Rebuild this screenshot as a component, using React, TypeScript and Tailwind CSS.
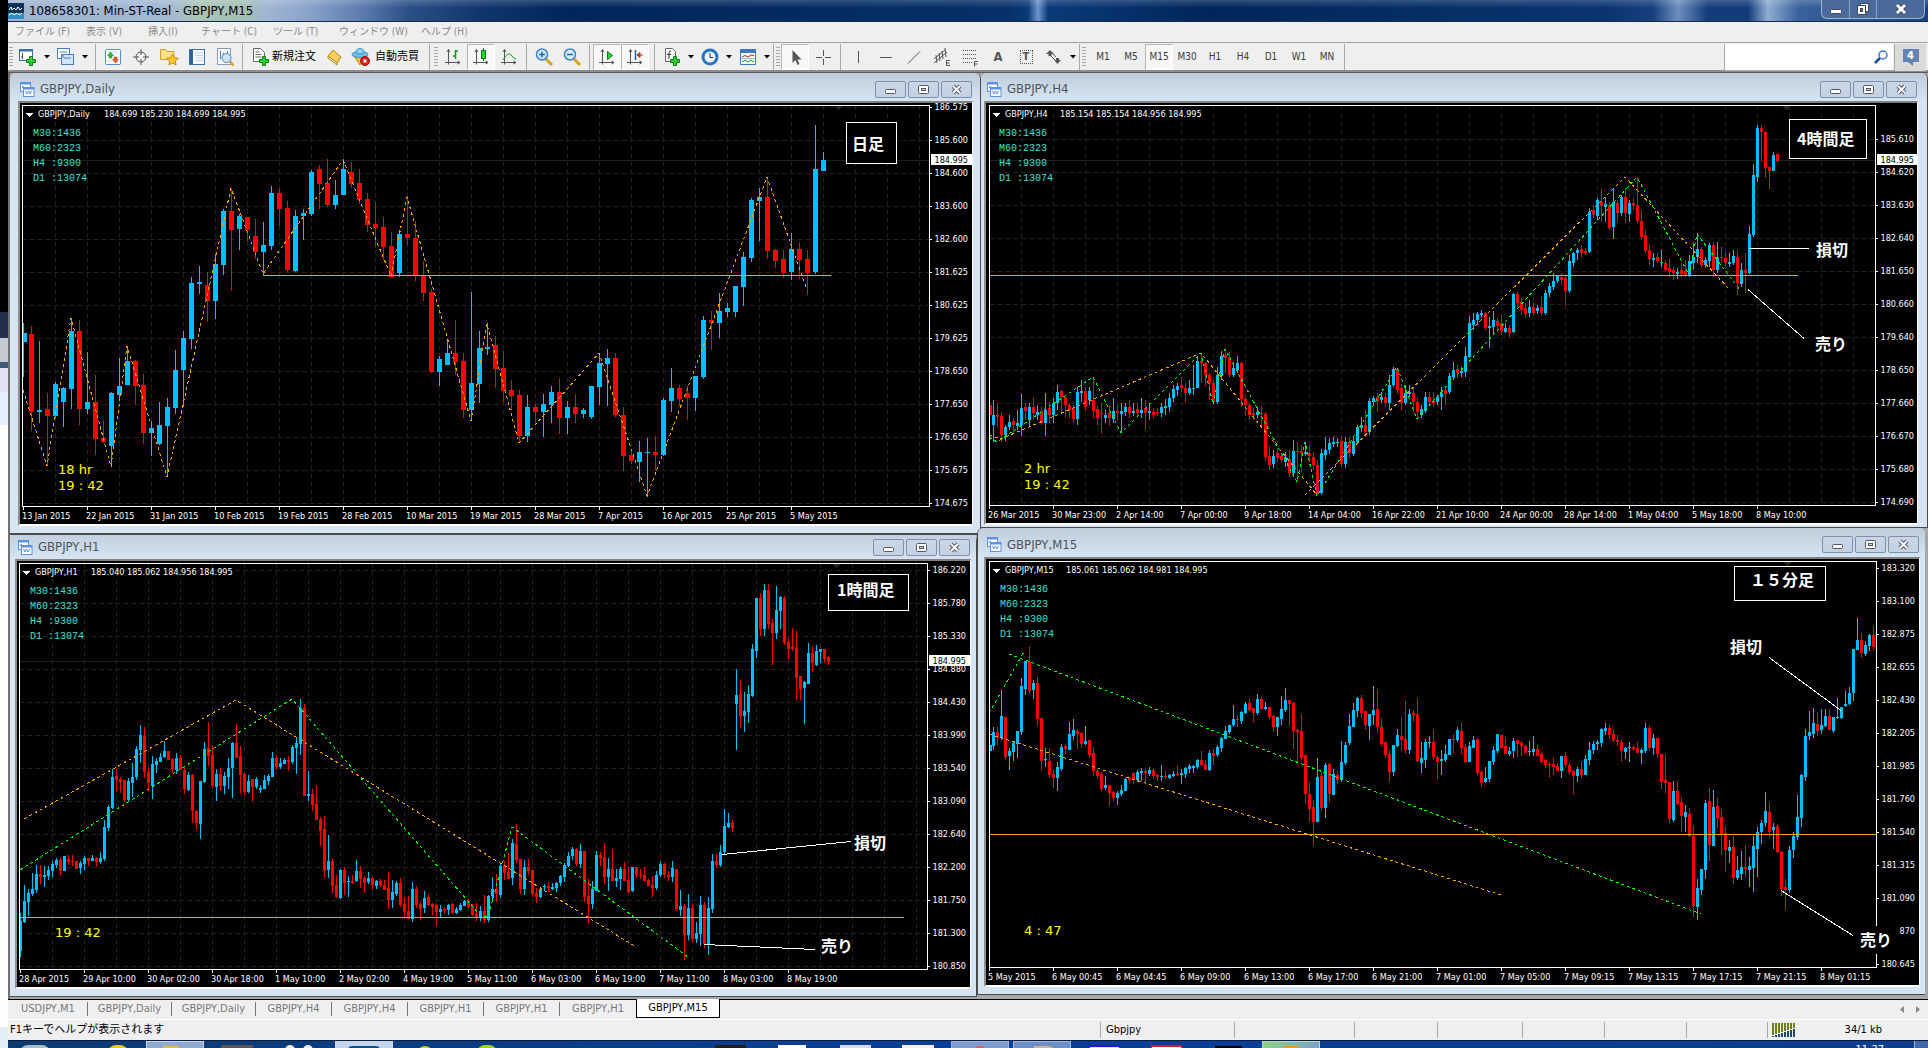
import React from "react";

type Pt = [number, number];

type Note = {
  text: string;
  at: Pt;
  line?: [number, number, number, number];
  box?: [number, number, number, number];
};

type ChartData = {
  view: [number, number, number, number];
  plot: [number, number, number, number];
  title: string;
  quote: string;
  quoteX: number;
  base: number;
  step: number;
  body: number;
  x0: number;
  priceY: number;
  prices: string[];
  dates: string[];
  grid: boolean;
  now?: number;
  support: [number, number, number];
  marker: number;
  orange: Pt[][];
  green: Pt[][];
  timer: { text: string; at: Pt }[];
  statsX: number;
  notes: Note[];
  cover?: [number, number, number, number];
  candles: string;
};

// candles: direction (B up / R down) then high, body top, body bottom, low
const dailyCandles = `
B700,730,757,860 R708,732,965,1022 B752,960,966,1000 R909,957,977,1127 B875,882,977,985 B890,894,936,1010
B683,723,897,957 R690,723,957,1004 B786,936,957,971 R856,936,1047,1094 R990,1044,1056,1060 B906,909,1067,1130
B804,888,915,927 B767,813,885,885 R811,813,888,941 R852,885,1028,1062 B993,1014,1029,1097 B936,1005,1062,1064
B924,951,1008,1160 B780,840,954,971 B724,744,840,951 B561,579,747,776 B528,576,582,612 R546,585,633,696
B492,522,633,686 B357,363,525,555 R293,363,420,603 B372,378,417,480 R381,381,420,453 R388,438,486,507
B396,465,486,556 B288,309,468,480 R294,309,357,407 R333,354,540,545 B360,378,543,546 B357,369,378,450
B240,246,372,377 R226,237,282,357 R207,279,345,350 B270,315,345,357 B208,237,315,315 R216,246,282,294
R237,279,330,342 R309,327,405,426 R336,402,414,471 R381,411,471,510 R427,468,561,561 B420,432,549,560
R319,432,444,468 R393,444,557,573 R513,557,609,632 R598,606,846,849 B798,807,846,887 B747,789,825,825
R690,789,816,855 R789,813,960,984 B606,879,960,993 B724,774,882,939 B700,771,777,795 R738,765,837,894
R783,834,903,936 R870,900,918,960 R900,915,1038,1060 B915,951,1038,1056 R942,951,966,1005 B912,942,966,1041
B888,906,945,998 R864,906,984,1032 B933,951,984,1032 R912,951,972,998 B953,960,972,984 B888,888,981,987
B790,819,891,945 B777,804,822,948 R789,804,975,980 R951,975,1098,1143 R1078,1095,1113,1122 B1053,1086,1116,1176
B1044,1086,1088,1220 R1038,1086,1095,1140 B924,930,1095,1098 B834,894,933,966 R885,894,927,948 R888,909,924,990
B858,858,924,963 B678,690,861,866 R663,690,699,780 B609,663,699,744 B639,654,666,681 B588,588,666,681
B486,501,591,648 B324,330,504,516 B294,321,333,453 R262,321,483,507 R477,480,513,534 R480,507,549,564
B430,477,546,570 R456,477,510,567 R480,507,549,615 B105,237,546,552 B186,210,243,243`;

const h4Candles = `
R928,945,975,1010 B930,975,1005,1055 R940,975,980,1010 R965,978,1035,1055 B1005,1010,1035,1052 B975,995,1010,1020
R985,993,1005,1030 B960,1000,1008,1020 B912,955,1005,1038 R940,952,962,990 B940,952,990,1010 R925,952,970,990
B945,965,975,990 R950,962,998,1005 B910,960,998,1038 R935,955,975,1000 B925,940,975,1000 B885,905,940,960
R900,903,922,965 R920,922,945,980 R940,945,960,985 R945,958,988,1000 B890,905,988,1005 B870,903,910,935
R890,903,952,960 B890,903,930,945 R862,930,962,985 R948,958,985,1005 R940,968,972,1030 B960,975,985,1000
R945,970,985,1005 B925,962,988,1000 R945,962,968,990 B940,962,972,1028 B940,952,965,978 R930,950,968,985
B940,962,968,978 R940,958,970,978 B925,960,968,985 R930,955,970,1020 B940,962,968,990 R955,965,975,985
R955,965,970,978 B940,952,970,980 B928,948,955,975 B910,925,950,965 B885,898,925,935 B880,888,900,918
R862,885,895,905 R878,895,910,935 B870,893,908,915 B825,893,896,915 B800,812,893,895 R790,812,820,880
R815,818,855,888 R850,855,880,930 R870,880,935,942 B830,855,935,942 B782,798,858,870 R778,795,805,850
R785,800,855,862 B815,835,855,862 B798,820,840,850 R815,820,928,952 R925,928,945,978 R938,945,975,990
R955,970,975,990 B950,965,975,985 R948,968,972,1010 R965,972,1100,1112 R1072,1098,1125,1140 B1080,1098,1122,1135
R1075,1090,1105,1115 R1090,1098,1110,1120 B1085,1100,1115,1130 R1080,1108,1148,1160 B1050,1082,1150,1160 R1055,1082,1085,1175
R1065,1082,1090,1145 B1060,1085,1092,1098 R1065,1090,1098,1115 R1085,1100,1125,1140 R1110,1125,1208,1215 B1078,1090,1210,1215
B1040,1080,1095,1110 B1045,1058,1080,1092 B1040,1055,1062,1070 B1045,1055,1060,1070 R1038,1052,1122,1130 B1040,1055,1122,1135
R1040,1055,1090,1105 B1045,1052,1092,1098 B1005,1012,1055,1060 B980,1005,1015,1025 R960,1005,1025,1042 B925,932,1025,1035
B918,925,935,945 R910,922,932,965 B905,920,930,940 R910,922,938,950 B855,885,940,960 B832,838,885,892
R835,838,900,910 R882,895,938,960 B885,908,938,945 B885,905,912,920 R895,908,935,965 R925,935,965,990
B945,958,975,985 B905,920,962,970 R905,920,935,945 R905,932,938,950 B915,922,935,945 B890,908,922,960
R888,900,912,945 B850,858,905,912 B815,840,862,868 R825,838,848,865 B830,842,850,860 B770,798,845,860
B678,700,800,805 B670,690,705,720 B665,672,690,705 B660,668,675,685 R665,668,715,720 B680,708,715,775
B662,690,712,735 R685,692,708,725 R675,700,722,735 B700,715,725,730 R705,715,728,742 B608,612,725,730
R605,612,640,650 R625,635,660,675 R640,655,672,680 B630,650,668,680 R640,652,668,675 B645,655,662,672
R618,650,668,675 B600,608,668,675 B580,588,608,620 B550,572,590,600 B555,558,572,580 R550,560,570,585
R558,565,602,645 B495,512,602,610 B485,490,518,530 B475,480,490,510 R465,478,488,500 R475,482,488,495
B355,365,485,490 R345,360,375,385 B325,330,378,390 R297,335,348,395 B320,342,350,395 R335,345,415,420
B295,335,412,448 R330,338,370,395 B315,320,370,378 R295,320,370,398 B330,338,372,395 R325,338,348,360
R262,345,392,398 R360,392,440,450 R420,435,482,490 R465,480,508,525 B490,505,510,530 R490,502,512,520
B480,515,520,530 R510,518,540,545 R508,535,545,562 R530,540,550,570 B535,545,552,568 R520,540,552,562
R510,542,555,562 B495,512,555,560 B460,500,518,540 B430,478,502,518 R470,478,525,535 B500,510,525,535
B458,465,512,530 R455,465,540,562 B455,500,540,548 R470,500,505,520 R485,505,520,530 B490,515,522,532
B480,498,518,525 R480,500,580,615 B520,540,582,592 R490,540,548,608 B408,432,548,552 B222,255,435,440
B105,115,260,275 R105,115,125,215 R122,125,235,262 R230,232,242,297 B186,195,242,243 R192,193,213,215`;

const h1Candles = `
B1150,1172,1262,1280 B1065,1113,1176,1178 B1077,1089,1116,1158 B1029,1077,1092,1098 B1005,1032,1080,1088 R1005,1032,1041,1062
B1008,1035,1041,1071 B1008,1020,1038,1050 B993,1002,1023,1041 B984,990,1005,1014 R984,990,1023,1035 B978,978,1023,1023
R975,987,996,1005 R975,993,997,1008 R993,993,1017,1017 B993,999,1014,1032 B978,984,1002,1020 R984,984,993,1008
B975,984,993,993 R981,984,996,1011 B966,984,996,1002 B870,891,987,993 B825,831,894,903 B717,741,834,837
R717,738,750,786 R741,747,756,789 R750,750,810,815 B744,753,810,813 B699,741,759,801 B648,657,741,750
B585,615,660,699 R591,618,726,744 R714,726,759,783 B678,702,768,807 B684,693,705,729 B669,681,696,696
B633,663,681,684 R663,663,690,690 R684,687,717,729 B669,684,720,732 R675,684,720,720 R708,720,777,792
B726,735,780,783 R732,735,843,879 R840,843,879,900 B753,753,882,927 B636,657,756,759 R576,654,678,708
R645,675,768,774 B717,732,771,813 R714,732,768,783 B726,738,768,792 B684,714,741,777 B636,639,714,804
R582,639,684,684 R648,678,735,789 R729,732,786,795 B735,753,786,789 R747,747,771,813 B741,747,771,777
B765,774,779,789 B735,750,777,777 B732,738,753,765 B666,684,741,741 R675,684,711,720 B684,699,711,717
B684,690,702,702 R678,690,696,723 B645,651,696,702 B624,639,654,732 B507,534,642,675 R522,534,798,798
B723,792,797,813 R777,792,825,843 R765,822,870,870 R861,867,903,948 R858,897,1023,1044 B915,993,1020,1044
R987,993,1068,1089 R1035,1065,1101,1104 B1017,1020,1104,1106 R1011,1020,1059,1095 B1038,1052,1057,1101 R1035,1052,1059,1062
B990,1023,1053,1056 R1008,1023,1047,1074 R1038,1044,1059,1089 B1026,1044,1056,1062 R1041,1044,1065,1080 B1050,1053,1068,1077
R1047,1053,1065,1071 R1050,1065,1080,1080 R1026,1074,1110,1137 B1050,1086,1110,1134 B1053,1059,1092,1098 R1044,1059,1125,1131
R1101,1122,1146,1161 R1098,1143,1167,1167 B1056,1077,1167,1176 R1068,1077,1125,1134 R1116,1122,1137,1170 B1083,1104,1134,1149
R1095,1101,1125,1128 R1119,1122,1131,1155 R1122,1125,1146,1188 B1125,1137,1146,1164 R1131,1137,1141,1149 B1122,1125,1140,1155
R1119,1122,1149,1152 B1131,1137,1149,1152 B1119,1125,1140,1143 B1110,1113,1128,1128 R1107,1113,1131,1134 R1122,1128,1155,1158
R1119,1152,1164,1173 B1128,1143,1164,1173 R1095,1143,1170,1179 B1095,1098,1170,1175 B1041,1077,1098,1110 R1032,1077,1092,1116
B1000,1008,1095,1104 R993,1005,1029,1050 R969,1026,1047,1047 B927,939,1044,1065 R882,942,990,999 R987,987,1077,1092
B990,1011,1077,1095 R987,1011,1023,1035 R1020,1020,1092,1102 R1074,1089,1101,1119 B1074,1077,1101,1104 B1062,1068,1070,1083
R1056,1068,1074,1086 B1059,1071,1076,1080 B1056,1059,1074,1086 B1035,1038,1059,1068 B999,1005,1041,1056 B966,978,1008,1011
B951,957,978,990 R954,957,1002,1008 B942,963,1002,1014 R963,963,1101,1116 R1047,1098,1122,1179 B1053,1077,1122,1137
B963,975,1083,1083 R966,975,984,1008 R939,981,1041,1062 B984,1017,1041,1083 R957,1017,1053,1053 B1017,1044,1053,1071
B1011,1017,1047,1080 R996,1017,1053,1053 R1011,1050,1086,1089 B1011,1011,1083,1086 R1011,1011,1035,1044 R1017,1035,1039,1047
R1011,1035,1053,1053 R1047,1050,1068,1068 R1038,1065,1074,1101 B1023,1035,1074,1080 B993,1002,1035,1041 R999,1002,1035,1044
R1023,1035,1041,1053 B993,1014,1041,1056 R1017,1017,1137,1143 B1080,1128,1140,1158 R1122,1128,1215,1290 B1092,1134,1215,1230
R1122,1134,1227,1236 B1176,1209,1227,1239 B1098,1125,1212,1248 R1116,1125,1242,1254 B1101,1134,1245,1275 B972,993,1137,1149
R972,993,1005,1014 B945,966,1005,1011 B837,888,966,972 B849,879,891,894 R870,879,894,906 B417,495,522,660
R450,492,558,594 B486,543,558,606 B465,492,546,579 B342,357,498,501 B204,204,363,384 R189,204,297,318
B162,180,297,318 R162,180,282,297 R267,279,309,405 B168,240,309,327 B198,201,243,297 R198,204,339,345
R324,336,357,387 R294,351,356,363 R303,354,444,510 R438,438,477,510 B453,456,474,582 B339,369,462,462
R351,369,399,426 B345,363,405,408 B357,357,366,399 R357,357,387,399 R378,381,396,405`;

const m15Candles = `
B640,645,663,690 B591,606,648,660 R591,606,624,645 B486,558,624,630 R561,561,681,690 B654,663,678,720
B633,639,666,693 B603,603,642,684 B444,468,606,615 B393,393,477,495 R351,396,483,492 B450,459,480,507
R441,459,567,588 R564,564,693,720 B654,687,690,711 R654,693,735,744 R717,732,744,774 B696,711,744,783
B642,651,717,723 R642,648,657,672 B576,612,660,660 B567,600,618,630 R597,603,612,657 R606,609,642,654
B588,633,642,645 R630,630,675,684 R651,669,723,738 R717,723,738,747 R726,732,777,783 B738,765,774,780
R765,765,789,828 R783,786,804,813 B783,789,804,825 B765,780,792,798 B744,747,783,783 R741,744,750,759
R729,729,750,762 B720,726,750,756 B714,723,729,753 R717,723,729,762 B711,720,732,738 R714,720,738,747
R732,735,741,753 B705,738,741,753 R723,738,741,747 B732,735,744,747 B723,732,738,741 R708,732,735,738
B717,729,735,762 B711,714,732,744 B702,708,717,729 B705,708,714,729 B687,690,711,717 R663,690,705,708
R690,702,720,720 B660,669,720,723 R657,669,678,705 B645,651,675,681 B621,624,654,666 B588,603,627,627
B585,585,606,612 B525,567,585,591 R555,567,570,591 B543,546,573,582 B516,522,549,552 R507,519,540,546
R534,534,549,576 B492,507,549,555 R501,507,537,540 B516,531,537,540 R531,531,561,567 R555,558,591,606
B561,561,591,618 B498,537,567,585 B474,510,540,546 R510,510,522,588 R516,519,603,657 R597,600,606,699
R552,603,684,690 R675,675,792,822 R759,792,837,876 R810,831,876,948 B684,741,876,876 R726,738,834,843
B699,705,834,864 R699,702,792,816 B717,732,795,795 R723,735,750,762 B633,696,750,756 B636,645,699,705
B552,588,639,645 B519,540,591,591 B501,504,543,561 R495,504,549,564 R543,543,585,597 B552,552,588,630
B468,540,555,585 R477,537,591,609 R567,591,642,648 R636,636,675,684 R663,672,726,756 B645,645,726,738
B597,615,648,651 R561,618,630,663 R513,627,660,669 B537,552,660,672 R540,549,555,573 R504,552,693,696
B636,684,699,729 B627,636,690,714 B618,636,640,654 R597,636,681,690 R678,681,696,747 B660,687,693,735
B645,672,690,696 B627,627,675,675 R615,627,630,669 B591,600,630,636 R579,603,654,672 R642,651,696,699
B636,648,696,696 B618,630,654,654 R627,627,729,735 R720,726,759,771 B711,744,756,759 B693,693,747,756
B648,660,696,705 B612,612,663,669 R615,615,654,654 R621,648,672,672 B651,663,672,678 B624,633,663,684
R630,630,642,681 R633,639,648,678 R645,648,669,669 B633,663,666,678 B618,657,666,678 R645,657,678,678
R666,672,696,699 R687,690,705,714 R696,702,705,741 R684,702,711,735 R699,708,723,723 B678,678,723,744
R666,678,705,711 R696,705,726,735 R720,723,738,792 B711,717,738,756 R693,717,735,744 B675,687,735,735
B636,660,690,705 B633,642,660,672 B630,636,642,660 B594,597,639,651 B579,594,603,615 R585,594,615,627
R597,612,630,636 R615,630,636,648 R627,636,663,693 B651,654,666,687 B636,651,654,696 R648,651,657,663
R636,654,669,669 B654,660,669,702 B579,594,663,669 R588,594,654,663 B612,624,654,675 R624,624,672,684
R672,672,756,777 R672,750,759,789 R756,756,867,879 B753,783,870,876 R753,783,822,825 R804,816,858,906
B825,846,861,906 R834,852,918,921 R885,918,1128,1161 B1047,1074,1131,1170 B1017,1017,1080,1095 B810,819,1020,1047
R774,813,945,993 B780,831,948,948 R804,828,864,894 R837,861,912,975 R888,909,960,1026 B930,951,963,999
R918,951,1044,1062 B978,1020,1044,1050 B963,1011,1032,1050 R945,1011,1017,1041 B981,1008,1020,1071 B918,948,1014,1086
B891,906,957,1041 B870,879,906,942 B786,843,879,891 R816,846,906,921 B879,891,900,957 R882,888,966,969
R963,966,1077,1098 R1047,1071,1080,1140 B948,960,1080,1089 B906,918,960,984 B795,861,921,930 B732,735,864,891
B597,618,741,753 B543,606,618,630 B534,579,612,624 R546,582,603,618 B537,585,600,612 B537,558,588,591
R537,558,600,600 B561,561,603,609 B504,561,564,567 B531,531,564,567 B483,522,528,531 B471,489,522,525
B357,357,489,513 B264,330,360,360 R309,330,369,381 B333,345,372,378 B312,315,348,363 R288,315,351,360`;

const stats = ["M30:1436", "M60:2323", "H4 :9300", "D1 :13074"];

const daily: ChartData = {
  view: [20, 103, 952, 421],
  plot: [22, 105, 929, 506],
  title: "GBPJPY,Daily",
  quote: "184.699 185.230 184.699 184.995",
  quoteX: 104,
  base: 90,
  step: 8,
  body: 5,
  x0: 23,
  priceY: 107,
  prices: ["186.575", "185.600", "184.600", "183.600", "182.600", "181.625", "180.625", "179.625", "178.650", "177.650", "176.650", "175.675", "174.675"],
  dates: ["13 Jan 2015", "22 Jan 2015", "31 Jan 2015", "10 Feb 2015", "19 Feb 2015", "28 Feb 2015", "10 Mar 2015", "19 Mar 2015", "28 Mar 2015", "7 Apr 2015", "16 Apr 2015", "25 Apr 2015", "5 May 2015"],
  grid: true,
  now: 160,
  support: [263, 831, 275],
  marker: 837,
  orange: [[[0, 900], [3, 1127], [6, 683], [11, 1130], [13, 767], [18, 1160], [26, 293], [30, 553], [40, 210], [46, 558], [48, 320], [56, 993], [58, 702], [62, 1060], [72, 790], [78, 1217], [93, 262], [98, 600]]],
  green: [],
  timer: [{ text: "18 hr", at: [58, 474] }, { text: "19 : 42", at: [58, 490] }],
  statsX: 33,
  notes: [{ text: "日足", at: [852, 150], box: [846, 122, 50, 41] }],
  candles: dailyCandles,
};

const h4: ChartData = {
  view: [986, 103, 931, 420],
  plot: [989, 105, 1875, 505],
  title: "GBPJPY,H4",
  quote: "185.154 185.154 184.956 184.995",
  quoteX: 1060,
  base: 90,
  step: 4,
  body: 3,
  x0: 989,
  priceY: 139,
  prices: ["185.610", "184.620", "183.630", "182.640", "181.650", "180.660", "179.640", "178.650", "177.660", "176.670", "175.680", "174.690"],
  dates: ["26 Mar 2015", "30 Mar 23:00", "2 Apr 14:00", "7 Apr 00:00", "9 Apr 18:00", "14 Apr 04:00", "16 Apr 22:00", "21 Apr 10:00", "24 Apr 00:00", "28 Apr 14:00", "1 May 04:00", "5 May 18:00", "8 May 10:00"],
  grid: true,
  now: 160,
  support: [989, 1798, 275],
  marker: 1785,
  orange: [[[0, 1035], [3, 1047], [53, 790], [82, 1215]], [[79, 1215], [159, 262], [185, 597]]],
  green: [[[0, 1040], [2, 1057], [26, 862], [33, 1028], [53, 788], [56, 942], [59, 778], [77, 1175], [79, 1055], [82, 1217], [102, 832], [107, 988], [162, 262], [175, 555], [177, 432], [188, 602]]],
  timer: [{ text: "2 hr", at: [1024, 473] }, { text: "19 : 42", at: [1024, 489] }],
  statsX: 999,
  notes: [
    { text: "4時間足", at: [1797, 145], box: [1789, 119, 77, 39] },
    { text: "損切", at: [1816, 256], line: [1749, 248, 1809, 248] },
    { text: "売り", at: [1815, 350], line: [1748, 289, 1804, 338] },
  ],
  candles: h4Candles,
};

const h1: ChartData = {
  view: [17, 561, 953, 426],
  plot: [19, 563, 927, 969],
  title: "GBPJPY,H1",
  quote: "185.040 185.062 184.956 184.995",
  quoteX: 91,
  base: 530,
  step: 4,
  body: 3,
  x0: 20,
  priceY: 570,
  prices: ["186.220", "185.780", "185.330", "184.880", "184.430", "183.990", "183.540", "183.090", "182.640", "182.200", "181.750", "181.300", "180.850"],
  dates: ["28 Apr 2015", "29 Apr 10:00", "30 Apr 02:00", "30 Apr 18:00", "1 May 10:00", "2 May 02:00", "4 May 19:00", "5 May 11:00", "6 May 03:00", "6 May 19:00", "7 May 11:00", "8 May 03:00", "8 May 19:00"],
  grid: true,
  now: 661,
  support: [20, 904, 917],
  marker: 835,
  orange: [[[1, 868], [54, 510], [154, 1250]]],
  green: [[[0, 1020], [68, 508], [115, 1155], [117, 1160], [123, 890], [167, 1280]]],
  timer: [{ text: "19 : 42", at: [55, 937] }],
  statsX: 30,
  notes: [
    { text: "1時間足", at: [837, 596], box: [828, 574, 80, 36] },
    { text: "損切", at: [854, 849], line: [722, 854, 851, 841] },
    { text: "売り", at: [821, 952], line: [704, 944, 815, 949] },
  ],
  candles: h1Candles,
};

const m15: ChartData = {
  view: [986, 559, 933, 426],
  plot: [989, 561, 1876, 967],
  title: "GBPJPY,M15",
  quote: "185.061 185.062 184.981 184.995",
  quoteX: 1066,
  base: 530,
  step: 4,
  body: 3,
  x0: 989,
  priceY: 568,
  prices: ["183.320", "183.100", "182.875", "182.655", "182.430", "182.205", "181.985", "181.760", "181.540", "181.315", "181.090", "870", "180.645"],
  dates: ["5 May 2015", "6 May 00:45", "6 May 04:45", "6 May 09:00", "6 May 13:00", "6 May 17:00", "6 May 21:00", "7 May 01:00", "7 May 05:00", "7 May 09:15", "7 May 13:15", "7 May 17:15", "7 May 21:15", "8 May 01:15"],
  grid: false,
  support: [989, 1876, 834],
  marker: 1786,
  orange: [[[0, 612], [128, 1094]]],
  green: [[[0, 548], [9, 360]], [[5, 372], [178, 1152]]],
  timer: [{ text: "4 : 47", at: [1024, 935] }],
  statsX: 1000,
  notes: [
    { text: "１５分足", at: [1750, 586], box: [1734, 566, 91, 34] },
    { text: "損切", at: [1730, 653], line: [1769, 657, 1841, 710] },
    { text: "売り", at: [1860, 946], line: [1781, 890, 1853, 935] },
  ],
  cover: [1855, 926, 42, 28],
  candles: m15Candles,
};

const Chart = ({ c }: { c: ChartData }) => {
  const [vx, vy, vw, vh] = c.view;
  const [l, t, r, b] = c.plot;
  const y = (v: number) => Math.round(c.base + v / 3);
  const x = (i: number) => c.x0 + i * c.step;
  const candles = c.candles
    .trim()
    .split(/\s+/)
    .map((s) => ({ up: s[0] === "B", v: s.slice(1).split(",").map(Number) }));
  const line = (pts: Pt[]) => pts.map(([i, v]) => `${x(i)},${y(v)}`).join(" ");
  const gridX: number[] = [];
  for (let g = c.x0 + 32; g < r; g += 32) gridX.push(g);

  return (
    <svg
      viewBox={`${vx} ${vy} ${vw} ${vh}`}
      className="block w-full bg-black font-['DejaVu_Sans_Condensed','Noto_Sans',sans-serif] text-[9px]"
      role="img"
      aria-label={c.title}
      shapeRendering="crispEdges"
    >
      {c.grid && (
        <g stroke="#1f1f1f" strokeDasharray="5 3">
          {gridX.map((g) => (
            <line key={g} x1={g + 0.5} x2={g + 0.5} y1={t} y2={b} />
          ))}
          {c.prices.map((p, i) => (
            <line key={p} x1={l} x2={r} y1={c.priceY + i * 33 + 0.5} y2={c.priceY + i * 33 + 0.5} />
          ))}
        </g>
      )}
      {c.now && <rect x={l} y={c.now} width={r - l} height="1" fill="#1f1f1f" />}
      <path d={`M${c.marker - 3} ${t + 1}h8l-4 4z`} fill="#262626" />

      {candles.map(({ up, v }, i) => (
        <g key={i} fill={up ? "#00bfff" : "#ff0000"}>
          <rect x={x(i)} y={y(v[0])} width="1" height={Math.max(1, y(v[3]) - y(v[0]))} />
          <rect
            x={Math.max(l, x(i) - (c.body - 1) / 2)}
            y={y(v[1])}
            width={c.body}
            height={Math.max(1, y(v[2]) - y(v[1]))}
          />
        </g>
      ))}
      <g fill="none" strokeDasharray="3 3">
        {c.orange.map((p, i) => (
          <polyline key={i} points={line(p)} stroke="#ffa500" />
        ))}
        {c.green.map((p, i) => (
          <polyline key={i} points={line(p)} stroke="#00ff00" />
        ))}
      </g>
      <rect x={c.support[0]} y={c.support[2]} width={c.support[1] - c.support[0]} height="1" fill="#ffa500" />

      {/* plot frame and scales */}
      <rect x={l + 0.5} y={t + 0.5} width={r - l} height={b - t} fill="none" stroke="#fff" />
      {c.cover && <rect x={c.cover[0]} y={c.cover[1]} width={c.cover[2]} height={c.cover[3]} fill="#000" />}
      {c.prices.map((p, i) => (
        <g key={p} fill="#fff">
          {p.length > 3 && <rect x={r} y={c.priceY + i * 33} width="3" height="1" />}
          <text x={r + 39} y={c.priceY + i * 33 + 3} textAnchor="end">
            {p}
          </text>
        </g>
      ))}
      {c.dates.map((d, i) => (
        <g key={d} fill="#fff">
          <rect x={c.x0 + i * 64} y={b} width="1" height="4" />
          <text x={c.x0 + i * 64 - 1} y={b + 13}>
            {d}
          </text>
        </g>
      ))}
      {c.now && (
        <>
          <rect x={r + 2} y={c.now - 6} width={vx + vw - r - 2} height="11" fill="#fff" />
          <text x={r + 39} y={c.now + 3} textAnchor="end">
            184.995
          </text>
        </>
      )}

      <path d={`M${l + 4} ${t + 8}h7l-3.5 4z`} fill="#fff" />
      <text x={l + 16} y={t + 12} fill="#fff">
        {c.title}
      </text>
      <text x={c.quoteX} y={t + 12} fill="#fff">
        {c.quote}
      </text>
      <g fill="#40e0d0" className="font-['Liberation_Mono',monospace] text-[10px] whitespace-pre">
        {stats.map((s, i) => (
          <text key={s} x={c.statsX} y={t + 31 + i * 15}>
            {s}
          </text>
        ))}
      </g>
      <g fill="#ffff00" className="font-['DejaVu_Sans',sans-serif] text-[13px]">
        {c.timer.map((m) => (
          <text key={m.text} x={m.at[0]} y={m.at[1]}>
            {m.text}
          </text>
        ))}
      </g>

      {c.notes.map((n) => (
        <g key={n.text}>
          {n.box && (
            <rect x={n.box[0] + 0.5} y={n.box[1] + 0.5} width={n.box[2]} height={n.box[3]} fill="#000" stroke="#fff" />
          )}
          {n.line && <line x1={n.line[0]} y1={n.line[1] + 0.5} x2={n.line[2]} y2={n.line[3] + 0.5} stroke="#fff" />}
          <text
            x={n.at[0]}
            y={n.at[1]}
            fill="#fff"
            className="font-['Noto_Sans_CJK_JP',sans-serif] text-[16px] font-bold"
          >
            {n.text}
          </text>
        </g>
      ))}
    </svg>
  );
};

const ChartIcon = () => (
  <svg viewBox="0 0 15 15" className="w-[15px] h-[15px] shrink-0" fill="none" stroke="#5b93e6">
    <rect x="0.5" y="0.5" width="10" height="9" fill="#fff" />
    <path d="M0.5 1.5h10" strokeWidth="2" />
    <path d="M2 6l1-2 1 3" />
    <rect x="3.5" y="5.5" width="10.5" height="9" fill="#fff" />
    <path d="M3.5 6.5h10.5" strokeWidth="2" />
    <path d="M5.5 9l1.5 3 1.5-3 1.5 3 1.5-3" />
  </svg>
);

const winBtn =
  "w-[31px] h-[17px] flex items-center justify-center rounded-xs border border-[#8090ac] bg-linear-to-b from-[#c9d6e5] to-[#c3d1e2]";

const WindowButtons = () => (
  <div className="flex gap-0.5">
    <button type="button" aria-label="最小化" className={winBtn}>
      <svg viewBox="0 0 11 11" className="w-[11px] h-[11px]">
        <rect x="0.5" y="5.5" width="10" height="4" rx="1" fill="#fff" stroke="#535666" />
      </svg>
    </button>
    <button type="button" aria-label="最大化" className={winBtn}>
      <svg viewBox="0 0 11 11" className="w-[11px] h-[11px]" stroke="#535666">
        <rect x="0.5" y="1.5" width="10" height="8" rx="1" fill="#fff" />
        <rect x="3.5" y="4.5" width="4" height="2" fill="#c6d3e3" />
      </svg>
    </button>
    <button type="button" aria-label="閉じる" className={winBtn}>
      <svg viewBox="0 0 11 11" className="w-[11px] h-[11px]">
        <path d="M2 2l7 7M9 2l-7 7" stroke="#535666" strokeWidth="4" />
        <path d="M2 2l7 7M9 2l-7 7" stroke="#fff" strokeWidth="2" />
      </svg>
    </button>
  </div>
);

const ChartWindow = ({ c, frame, bar }: { c: ChartData; frame: string; bar: string }) => (
  <section className={`border-[#4a4a4c] rounded-t-md bg-[#d7e4f2] ${frame}`}>
    <header className={`flex items-center justify-between ${bar}`}>
      <h2 className="flex items-center gap-[5px] text-[13px] leading-4 text-[#4c5560]">
        <ChartIcon />
        {c.title}
      </h2>
      <WindowButtons />
    </header>
    <div className="border-t-2 border-l-2 border-r border-b-2 border-t-[#808080] border-l-[#909090] border-r-white border-b-white">
      <Chart c={c} />
    </div>
  </section>
);

const Grip = () => <span className="w-1 h-5 mx-px shrink-0 bg-[repeating-linear-gradient(#a8a8a8_0_1px,#efefef_1px_3px)]" />;
const Sep = ({ tight }: { tight?: boolean }) => (
  <span className={`w-px h-[26px] shrink-0 bg-[#a9a9a9] ${tight ? "mx-px" : "mx-[3px]"}`} />
);

const Drop = ({ label }: { label: string }) => (
  <button type="button" aria-label={label} className="w-[10px] h-6 flex items-center justify-center shrink-0">
    <svg viewBox="0 0 6 4" className="w-[6px] h-1">
      <path d="M0 0h6l-3 3.5z" fill="#000" />
    </svg>
  </button>
);

const Tool = ({ label, on, children }: { label: string; on?: boolean; children: React.ReactNode }) => (
  <button
    type="button"
    aria-label={label}
    className={`w-7 h-[26px] flex items-center justify-center shrink-0 ${
      on ? "bg-[#f8f8f8] border border-[#b5b5b5] border-r-white border-b-white" : ""
    }`}
  >
    <svg viewBox="0 0 20 20" className="w-5 h-5" fill="none" stroke="#555">
      {children}
    </svg>
  </button>
);

const plus = (
  <path d="M11.5 9.5h3v3h3v3h-3v3h-3v-3h-3v-3h3z" fill="#2fd02f" stroke="#067d12" />
);
const axes = <path d="M5.5 2.5v15M2 15.5h15M4 5l1.5-2.5 1.5 2.5M14.5 14l2.5 1.5-2.5 1.5" strokeWidth="1" />;

const NewOrderIcon = () => (
  <svg viewBox="0 0 20 20" className="w-5 h-5 shrink-0" fill="none" stroke="#666">
    <path d="M3.5 1.5h7l4 4v9h-11z" fill="#fff" />
    <path d="M5.5 5h4M5.5 7.500h6M5.5 10h6" />
    <g transform="translate(1 0)">{plus}</g>
  </svg>
);

const RobotIcon = () => (
  <svg viewBox="0 0 20 20" className="w-5 h-5 shrink-0" fill="none">
    <path d="M3 9l6 9 7-9z" fill="#f1c232" stroke="#b8860b" />
    <ellipse cx="9" cy="7.500" rx="8" ry="3" fill="#6fbfea" stroke="#3b8fc8" />
    <path d="M5 6q0-4.500 4-4.500t4 4.500q-4 2-8 0z" fill="#8fd0f2" stroke="#3b8fc8" />
    <circle cx="14" cy="14" r="4.500" fill="#d9201a" stroke="#a01008" />
    <rect x="12.500" y="12.500" width="3" height="3" fill="#fff" />
  </svg>
);

const menus = [
  { text: "ファイル (F)", w: "w-[71px]" },
  { text: "表示 (V)", w: "w-[62px]" },
  { text: "挿入(I)", w: "w-[53px]" },
  { text: "チャート (C)", w: "w-[72px]" },
  { text: "ツール (T)", w: "w-[66px]" },
  { text: "ウィンドウ (W)", w: "w-[82px]" },
  { text: "ヘルプ (H)", w: "w-[60px]" },
];

const frames = ["M1", "M5", "M15", "M30", "H1", "H4", "D1", "W1", "MN"];

const tabs = [
  { text: "USDJPY,M1", w: "w-[79px]" },
  { text: "GBPJPY,Daily", w: "w-[84px]" },
  { text: "GBPJPY,Daily", w: "w-[84px]" },
  { text: "GBPJPY,H4", w: "w-[76px]" },
  { text: "GBPJPY,H4", w: "w-[76px]" },
  { text: "GBPJPY,H1", w: "w-[76px]" },
  { text: "GBPJPY,H1", w: "w-[76px]" },
  { text: "GBPJPY,H1", w: "w-[76px]" },
];

const TitleBar = () => (
  <header className="flex items-center justify-between h-[22px] border-b border-[#1b2a4a] bg-[linear-gradient(#ffffff30_0,#ffffff00_8px),linear-gradient(90deg,#9db3d0_0,#a3b8d4_160px,#a9c4b8_190px,#a3c0b4_235px,#a0b5d4_260px,#8aa3cb_300px,#5f7fb0_350px,#2b5088_400px,#12366f_470px,#00265c_560px,#07306a_1000px,#0a3a77_1020px,#6d94cc_1030px,#0b3a78_1040px,#00265c_1200px,#0b3570_1600px,#16417e_1645px,#6d8fbd_1670px,#123c7a_1700px,#123c7a_1740px,#8fadd2_1760px,#3a629c_1790px,#16417e_100%)]">
    <h1 className="flex items-center gap-[5px] text-[13px] leading-5 text-black">
      <svg viewBox="0 0 16 16" className="w-4 h-4">
        <rect width="16" height="16" rx="1" fill="#0d3358" />
        <path d="M0 10h16v6h-16z" fill="#2f8fc4" />
        <path d="M1 7l2-3 1 3 2-2 2 2 2-3 2 3 2-2M1 12l3-2 2 2 3-2 2 2 3-2" fill="none" stroke="#fff" />
      </svg>
      108658301: Min-ST-Real - GBPJPY,M15
    </h1>
    <div className="flex self-start mr-[3px] rounded-b-md border border-t-0 border-[#9db2d2] bg-[#4a6a9c]">
      <button type="button" aria-label="最小化" className="w-7 h-[18px] flex items-center justify-center border-r border-[#8ba2c5]">
        <svg viewBox="0 0 12 12" className="w-3 h-3">
          <rect x="0.500" y="6.500" width="11" height="4" rx="1" fill="#fff" stroke="#414a5e" />
        </svg>
      </button>
      <button type="button" aria-label="元に戻す" className="w-[27px] h-[18px] flex items-center justify-center border-r border-[#8ba2c5]">
        <svg viewBox="0 0 12 12" className="w-3 h-3" fill="#fff" stroke="#414a5e">
          <rect x="3.500" y="0.500" width="8" height="8" />
          <rect x="0.500" y="2.500" width="8" height="9" />
          <rect x="3.500" y="5.500" width="2" height="3" fill="#4a6a9c" />
        </svg>
      </button>
      <button type="button" aria-label="閉じる" className="w-[47px] h-[18px] flex items-center justify-center">
        <svg viewBox="0 0 12 12" className="w-3 h-3">
          <path d="M2 2l8 8M10 2l-8 8" stroke="#414a5e" strokeWidth="5" />
          <path d="M2 2l8 8M10 2l-8 8" stroke="#fff" strokeWidth="3" />
        </svg>
      </button>
    </div>
  </header>
);

const Toolbar = () => (
  <div className="flex items-center h-[29px] pt-px border-b-2 border-[#8c8c8c] bg-[#efefef]">
    <Grip />
    <Tool label="新規チャート">
      <rect x="1.500" y="2.500" width="13" height="11" fill="#fff" stroke="#3a6ea5" />
      <path d="M1.500 3.500h13" stroke="#3a6ea5" strokeWidth="2" />
      <path d="M4.500 6v6M3 10h2" />
      {plus}
    </Tool>
    <Drop label="新規チャートの一覧" />
    <Tool label="組表示">
      <rect x="1.500" y="1.500" width="12" height="10" fill="#fff" stroke="#4a7ebb" />
      <rect x="5.500" y="7.500" width="12" height="10" fill="#d6e6fa" stroke="#4a7ebb" />
      <path d="M4 5h7M7 8v3M8 11h7" stroke="#4a7ebb" />
    </Tool>
    <Drop label="組表示の一覧" />
    <span className="w-0.5" />
    <Sep />
    <Tool label="気配値表示">
      <rect x="2.500" y="2.500" width="15" height="15" rx="1" fill="#fff" stroke="#4a90d9" />
      <path d="M4 5h11M4 14h11" stroke="#c5ddf5" />
      <path d="M7.500 5l3 3.500h-1.500v2.500h-3v-2.500h-1.500z" fill="#2ebd2e" stroke="#0e8a1a" strokeWidth=".5" />
      <path d="M12.500 16l3-3.500h-1.500v-2.500h-3v2.500h-1.500z" fill="#ee5a24" stroke="#b33c0b" strokeWidth=".5" />
    </Tool>
    <Tool label="データウィンドウ">
      <circle cx="10" cy="10" r="5" />
      <path d="M10 2v6M10 12v6M2 10h6M12 10h6" />
    </Tool>
    <Tool label="ナビゲーター">
      <path d="M1.500 2.500h5l1.500 2h7v8h-13.500z" fill="#fbe28a" stroke="#c9a227" />
      <path d="M13.500 7l1.800 3.800 4 .5-3 2.700.8 4-3.600-2-3.600 2 .8-4-3-2.700 4-.5z" fill="#ffc928" stroke="#c98a10" />
    </Tool>
    <Tool label="ターミナル">
      <rect x="2.500" y="2.500" width="15" height="15" fill="#f5faff" stroke="#3a6ea5" />
      <path d="M4.500 3v14" stroke="#2d62a0" strokeWidth="3" />
      <path d="M8 6h8M8 8.500h8M8 11h8M8 13.500h8" stroke="#c5d5e8" />
    </Tool>
    <Tool label="ストラテジーテスター">
      <rect x="2.500" y="1.500" width="13" height="16" fill="#f4f8fc" stroke="#8a9db5" />
      <path d="M5.500 4v8M8.500 6v6M12.500 4v4" stroke="#5b7fa8" />
      <circle cx="11.500" cy="11" r="4.500" fill="#cfe6fa" stroke="#4a86c8" />
      <path d="M15 14.500l3.500 4" stroke="#d9a520" strokeWidth="2.500" />
    </Tool>
    <Sep />
    <button type="button" className="flex items-center gap-[2px] ml-[4px] h-[26px] shrink-0">
      <NewOrderIcon />
      新規注文
    </button>
    <span className="w-1" />
    <Tool label="メタエディター">
      <path d="M4 9l5-6 8 7-4 6z" fill="#f6cf63" stroke="#b8860b" />
      <path d="M4 9l9 7v2l-9-7z" fill="#fff" stroke="#b8860b" />
    </Tool>
    <button type="button" className="flex items-center gap-[4px] ml-[3px] h-[26px] shrink-0">
      <RobotIcon />
      自動売買
    </button>
    <span className="w-[7px]" />
    <Sep />
    <Grip />
    <Tool label="バーチャート">
      {axes}
      <path d="M12.500 3v9M10 9h2.500M12.500 4h2.500" stroke="#0a9a1a" strokeWidth="1.500" />
    </Tool>
    <Tool label="ローソク足" on>
      {axes}
      <path d="M12.500 1v13" stroke="#067d12" />
      <rect x="10.500" y="3.500" width="4" height="8" fill="#2fd02f" stroke="#067d12" />
    </Tool>
    <Tool label="ラインチャート">
      {axes}
      <path d="M4 13q5-9 8-5t5 4" stroke="#0a9a1a" />
    </Tool>
    <Sep />
    <Tool label="ズームイン">
      <path d="M12 12l6 6" stroke="#d9a520" strokeWidth="3" />
      <circle cx="8" cy="7.500" r="5.500" fill="#d5ecff" stroke="#3c82c8" strokeWidth="1.500" />
      <path d="M5 7.500h6M8 4.500v6" stroke="#2264a8" strokeWidth="1.500" />
    </Tool>
    <Tool label="ズームアウト">
      <path d="M12 12l6 6" stroke="#d9a520" strokeWidth="3" />
      <circle cx="8" cy="7.500" r="5.500" fill="#d5ecff" stroke="#3c82c8" strokeWidth="1.500" />
      <path d="M5 7.500h6" stroke="#2264a8" strokeWidth="1.500" />
    </Tool>
    <Sep />
    <Tool label="自動スクロール" on>
      {axes}
      <path d="M10.500 4.500l5 4-5 4z" fill="#2fd02f" stroke="#067d12" />
    </Tool>
    <Tool label="チャートシフト" on>
      {axes}
      <path d="M10.500 3v10" stroke="#1f5fa8" strokeWidth="1.500" />
      <path d="M12 8h6M12 8l3-2.500v5z" fill="#c0390b" stroke="#c0390b" />
    </Tool>
    <span className="w-0.5" />
    <Sep />
    <Tool label="インディケーター">
      <path d="M3.500 1.500h7l3 3v10h-10z" fill="#fff" stroke="#666" />
      <path d="M9 4q-2-.5-2 2v6M5 7.500h4" stroke="#333" />
      {plus}
    </Tool>
    <Drop label="インディケーターの一覧" />
    <Tool label="時間軸">
      <circle cx="10" cy="10" r="7" fill="#e9f4ff" stroke="#2a72c4" strokeWidth="3" />
      <path d="M10 6v4.500h3" stroke="#333" />
    </Tool>
    <Drop label="時間軸の一覧" />
    <Tool label="定型チャート">
      <rect x="2.500" y="2.500" width="15" height="15" fill="#fff" stroke="#3a78c0" />
      <path d="M2.500 4.500h15" stroke="#3a78c0" strokeWidth="3" />
      <path d="M4 10l3-1.500 3 1.500 3-2 3 .5" stroke="#a02818" />
      <path d="M4 15l3-2 3 2 3-2 3 2" stroke="#0a9a1a" />
      <path d="M3 11.500h14" stroke="#9bbce0" />
    </Tool>
    <Drop label="定型チャートの一覧" />
    <Sep tight />
    <Grip />
    <Tool label="カーソル" on>
      <path d="M7.500 3v13l3-3 2 5 2-1-2-4.500h4z" fill="#555" stroke="none" />
    </Tool>
    <Tool label="十字カーソル">
      <path d="M10.500 3v6M10.500 12v6M3 10.500h6M12 10.500h6" />
    </Tool>
    <Sep />
    <Tool label="垂直線">
      <path d="M10.500 4v12" />
    </Tool>
    <Tool label="水平線">
      <path d="M4 10.500h12" />
    </Tool>
    <Tool label="トレンドライン">
      <path d="M4 16.500l12-12" />
    </Tool>
    <Tool label="平行チャネル">
      <path d="M2 12l11-9M2 16l13-11M4 8l1 8M7 6l1 8M10 4l1 8M13 1l1 9" />
      <path d="M18 13.500h-3.500v5h3.500M14.500 16h3" />
    </Tool>
    <Tool label="フィボナッチ">
      <path d="M3 3.500h14M3 7.500h14M3 11.500h14M3 15.500h9" strokeDasharray="1 1" />
      <path d="M18 14.500h-3.500v5M14.500 17h3" />
    </Tool>
    <button type="button" aria-label="テキスト" className="w-7 h-6 shrink-0 text-[13px] font-bold text-[#555]">
      A
    </button>
    <button type="button" aria-label="テキストラベル" className="w-7 h-6 flex items-center justify-center shrink-0">
      <span className="w-[13px] h-[14px] border border-dotted border-[#555] text-[11px] leading-3 font-bold text-[#555]">T</span>
    </button>
    <Tool label="矢印">
      <path d="M2 7l4-4 4 4-2.500 0v2h-3v-2zM10 13h2v-2h3v2h2l-3.500 4z" fill="#555" stroke="none" />
      <path d="M7 9l4 4M9 7l3 3" />
    </Tool>
    <Drop label="矢印の一覧" />
    <Sep tight />
    <Grip />
    <div className="flex pl-[2px] text-[10px] text-[#3c3c3c]">
      {frames.map((f) => (
        <button
          key={f}
          type="button"
          className={`w-7 h-[26px] text-center ${
            f === "M15" ? "bg-[#f8f8f8] border border-[#b5b5b5] border-r-white border-b-white" : ""
          }`}
        >
          {f}
        </button>
      ))}
    </div>
    <Sep />
    <div className="flex items-center ml-auto h-[27px] w-[169px] border-l border-b border-[#a9a9a9] bg-white">
      <input type="text" aria-label="検索" className="flex-1 min-w-0 h-6 px-1 outline-none" />
      <button type="button" aria-label="検索する" className="mr-[5px]">
        <svg viewBox="0 0 14 14" className="w-[14px] h-[14px]" fill="none">
          <path d="M1 13l5-5" stroke="#1648a8" strokeWidth="2.500" />
          <circle cx="9" cy="5" r="4" fill="#fff" stroke="#3f78d0" strokeWidth="1.500" />
        </svg>
      </button>
    </div>
    <button
      type="button"
      aria-label="メッセージ 4"
      className="w-8 h-[27px] ml-px mr-[2px] flex flex-col items-center justify-center border-l border-[#a9a9a9] bg-[#dadada]"
    >
      <span className="w-4 h-[13px] bg-[#6383b4] text-[11px] leading-[13px] font-bold text-white">4</span>
      <svg viewBox="0 0 8 4" className="w-2 h-1">
        <path d="M1 0h5v4z" fill="#6383b4" />
      </svg>
    </button>
  </div>
);

const TabBar = () => (
  <nav className="flex h-5 border-t border-black bg-[#efefef] text-[11px] text-[#777]">
    <div className="flex items-start pl-[1px]">
      {tabs.map((t, i) => (
        <button
          key={i}
          type="button"
          className={`h-[14px] mt-[2px] leading-[14px] whitespace-nowrap ${t.w} ${i < tabs.length - 1 ? "border-r border-[#777]" : ""}`}
        >
          {t.text}
        </button>
      ))}
      <button
        type="button"
        className="h-[19px] w-[84px] -mt-px border border-t-0 border-black bg-white text-black leading-[18px]"
      >
        GBPJPY,M15
      </button>
    </div>
    <div className="flex items-center gap-3 ml-auto mr-2">
      <button type="button" aria-label="前へ">
        <svg viewBox="0 0 4 7" className="w-1 h-[7px]"><path d="M4 0v7l-4-3.500z" fill="#888" /></svg>
      </button>
      <button type="button" aria-label="次へ">
        <svg viewBox="0 0 4 7" className="w-1 h-[7px]"><path d="M0 0v7l4-3.500z" fill="#888" /></svg>
      </button>
    </div>
  </nav>
);

const cell = "h-4 border-l border-[#a9a9a9] shrink-0";

const StatusBar = () => (
  <footer className="flex items-center h-[21px] border-t border-white bg-[#efefef] text-[11px] text-black">
    <p className="flex-1 pl-[2px]">F1キーでヘルプが表示されます</p>
    <span className={`${cell} w-[134px] pl-[5px] leading-4`}>Gbpjpy</span>
    <span className={`${cell} w-[120px]`} />
    <span className={`${cell} w-[83px]`} />
    <span className={`${cell} w-[85px]`} />
    <span className={`${cell} w-[82px]`} />
    <span className={`${cell} w-[82px]`} />
    <span className={`${cell} w-[81px]`} />
    <span className={`${cell} w-[161px] pl-1 pr-[46px] flex items-center justify-between leading-4`}>
      <svg viewBox="0 0 24 14" className="w-6 h-[14px]" strokeWidth="2">
        {[0, 1, 2, 3, 4, 5, 6, 7].map((i) => (
          <g key={i}>
            <path d={`M${i * 3 + 1} 0v${12 - i}`} stroke="#6b7d1c" />
            <path d={`M${i * 3 + 1} ${13 - i}v${i + 1}`} stroke="#1c4a6b" />
          </g>
        ))}
      </svg>
      34/1 kb
    </span>
  </footer>
);

const task = "h-2 shrink-0";

// only the top edge of the taskbar is visible under the window
const TaskBar = () => (
  <div className="flex items-start h-2 overflow-hidden border-t border-[#0a1c40] bg-linear-to-r from-[#0d3a70] via-[#0a3f98] to-[#0d3e8c]">
    <span className={`${task} ml-3 w-[30px] mt-1 rounded-t-full bg-[#a9bccb]`} />
    <span className={`${task} ml-[58px] w-5 mt-1 rounded-t-full bg-[#e9c52c]`} />
    <span className={`${task} ml-[18px] w-[58px] px-4 pt-1 border border-[#c7d6ea] bg-[#8fa9cf]`}>
      <span className="block h-2 w-4 bg-[#e0b95a]" />
    </span>
    <span className={`${task} ml-[17px] w-8 mt-1 bg-[#555]`} />
    <span className={`${task} ml-8 w-[10px] mt-1 rounded-t-full bg-[#f4efe2]`} />
    <span className={`${task} ml-2 w-[10px] mt-1 rounded-t-full bg-[#f4efe2]`} />
    <span className={`${task} ml-[22px] w-[58px] px-3 pt-1 border border-[#c7d6ea] bg-[#c2d3ea]`}>
      <span className="block h-2 w-8 rounded-t bg-[#0d4f86]" />
    </span>
    <span className={`${task} ml-6 w-4 mt-[5px] rounded-t-full bg-[#c6d430]`} />
    <span className={`${task} ml-11 w-5 mt-1 rounded-t-full bg-[#a3d321]`} />
    <span className={`${task} ml-[218px] w-[31px] mt-1 bg-[#1d1d1d]`} />
    <span className={`${task} ml-8 w-[28px] mt-1 bg-white`} />
    <span className={`${task} ml-[34px] w-[31px] mt-1 bg-[#d6d9f0]`} />
    <span className={`${task} ml-[31px] w-[32px] mt-1 bg-[#f4f0f0]`} />
    <span className={`${task} ml-[17px] w-[58px] px-5 pt-1 border border-[#9fb6dc] bg-[#7e9bcd]`}>
      <span className="block h-2 w-4 rounded-t-full bg-[#e35a4c]" />
    </span>
    <span className={`${task} ml-1 w-[58px] px-5 pt-1 border border-[#9fb6dc] bg-[#6e8fc6]`}>
      <span className="block h-2 w-[22px] rounded-tr-full bg-[#c9b79a]" />
    </span>
    <span className={`${task} ml-[18px] w-[31px] mt-1 border-t-2 border-x border-[#1a1ae6] bg-[#f5d5d8]`} />
    <span className={`${task} ml-[31px] w-[31px] mt-1 border-t-2 border-x border-[#d41c3c] bg-white`} />
    <span className={`${task} ml-[33px] w-[27px] mt-[5px] bg-black`} />
    <span className={`${task} ml-5 w-[58px] px-5 pt-1 border border-[#b9d8b9] bg-linear-to-r from-[#8fd07c] to-[#7e9fc9]`}>
      <span className="block h-2 w-4 bg-[#e39a2e]" />
    </span>
    <span className="ml-auto mr-[30px] pt-[3px] text-[11px] leading-3 text-white">11:27</span>
    <span className={`${task} w-[14px] border-l border-[#9fb6dc] bg-[#3f68a8]`} />
  </div>
);

const App = () => {
  return (
    <div className="flex min-h-screen bg-white text-[11px] leading-4 font-['DejaVu_Sans_Condensed','Noto_Sans_CJK_JP',sans-serif]">
      <aside className="w-2 shrink-0 bg-[linear-gradient(#000_0_312px,#22304d_312px_338px,#c6cbd3_338px_362px,#3d5a78_362px_368px,#e2e2f2_368px_392px,#e3effb_392px_425px,#fdfdfd_425px_1027px,#e3edf8_1027px)]" />
      <main className="flex-1 min-w-0 flex flex-col bg-[#a7a7a7]">
        <TitleBar />
        <nav className="flex items-center h-[21px] pl-[7px] bg-[#efefef] border-b border-[#a0a0a0] text-[10px] text-[#8a8a8a]">
          {menus.map((m) => (
            <button key={m.text} type="button" className={`text-left whitespace-nowrap ${m.w}`}>
              {m.text}
            </button>
          ))}
        </nav>
        <Toolbar />
        <div className="grid grid-cols-[971fr_947fr] items-start pb-0.5 border-t border-[#5a5a5a] border-l-2 border-l-[#707070]">
          <div>
            <ChartWindow c={daily} frame="pl-2 pr-[7px] pb-[7px] border-r border-b-2" bar="h-7 pt-1 -ml-2 -mr-[7px] pl-[10px] pr-2 rounded-t-md bg-linear-to-b from-[#bfccd9] to-[#d7e4f2]" />
            <ChartWindow c={h1} frame="mr-1 pl-[5px] pr-[5px] pb-[7px] border-r border-b" bar="h-6 -ml-[5px] -mr-[5px] pl-2 pr-[6px] bg-linear-to-b from-[#c3d0dd] to-[#d7e4f2]" />
          </div>
          <div>
            <ChartWindow c={h4} frame="pl-[3px] pr-[9px] pb-0.5 border-r border-b" bar="h-7 pt-1 -ml-[3px] -mr-[9px] pl-[6px] pr-[10px] rounded-t-md bg-linear-to-b from-[#bfccd9] to-[#d7e4f2]" />
            <ChartWindow c={m15} frame="relative -ml-1 mr-[3px] pl-[6px] pr-[5px] pb-[7px] border-l border-b" bar="h-[29px] pt-1 -ml-[6px] -mr-[5px] pl-[9px] pr-[6px] rounded-t-md bg-linear-to-b from-[#bfccd9] to-[#d7e4f2]" />
          </div>
        </div>
        <TabBar />
        <StatusBar />
        <TaskBar />
      </main>
    </div>
  );
};

export default App;
